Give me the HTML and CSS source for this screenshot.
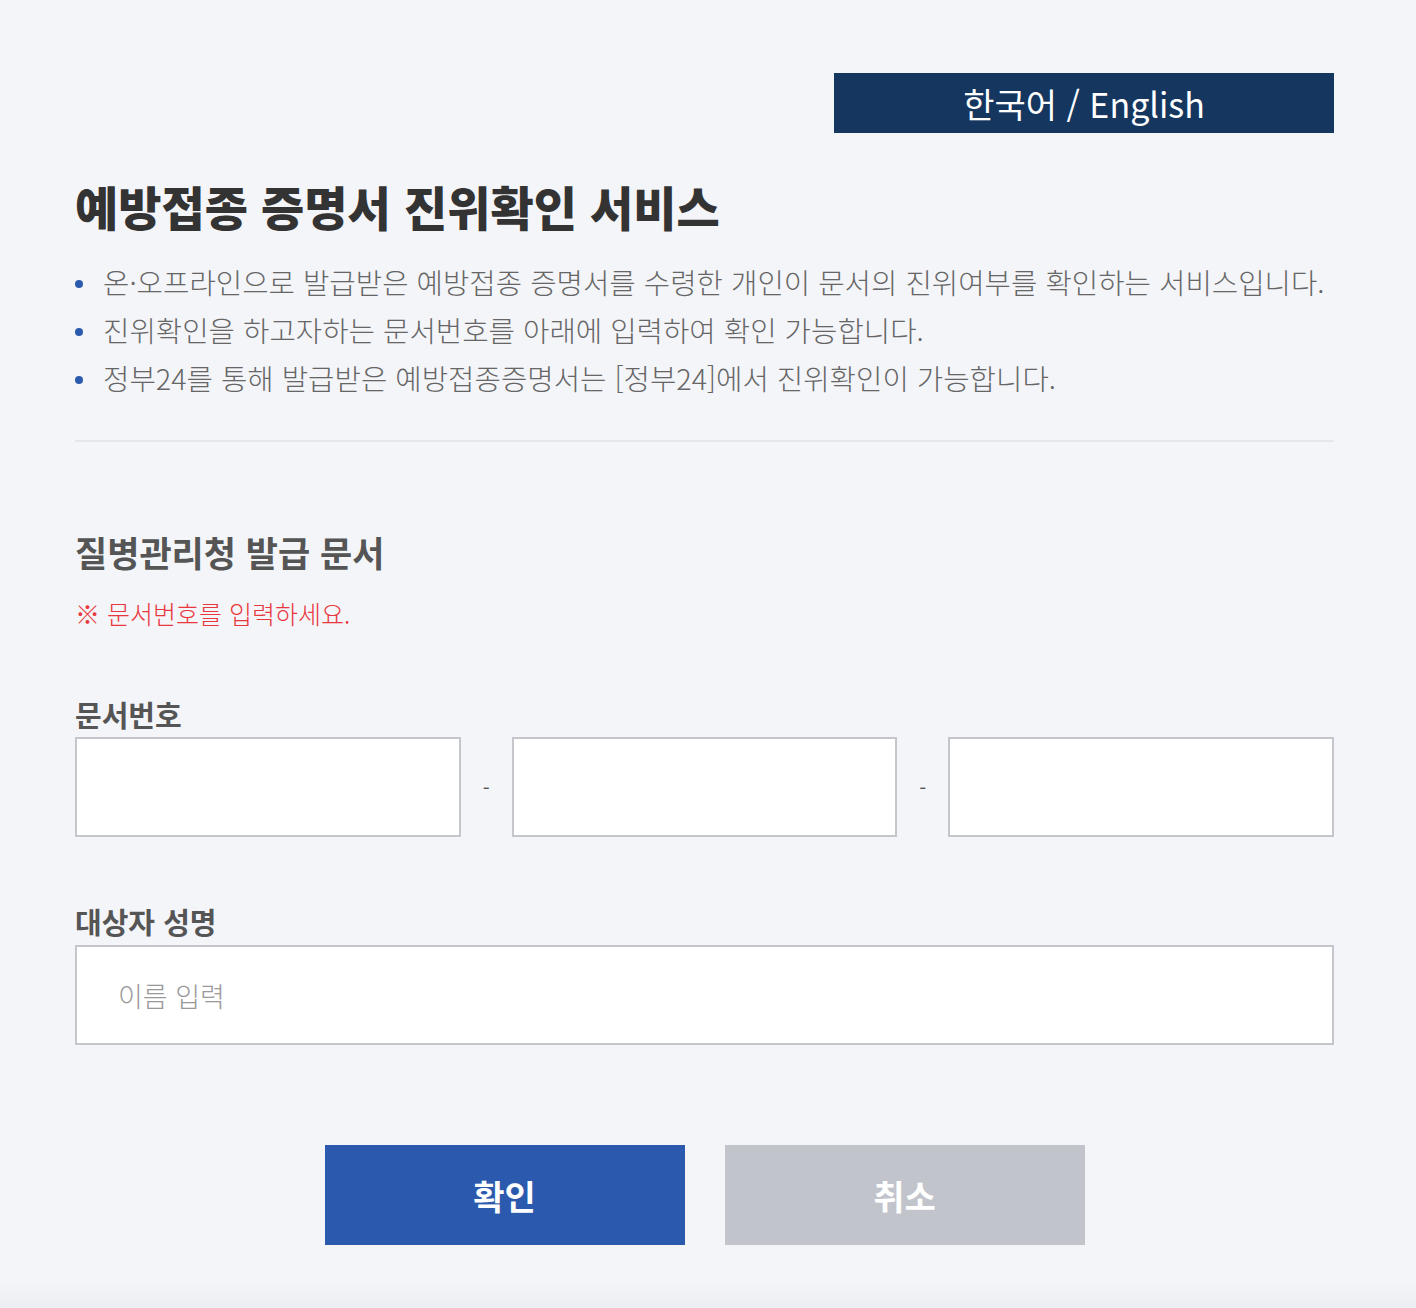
FILE: index.html
```html
<!DOCTYPE html>
<html lang="ko">
<head>
    <meta charset="UTF-8">
    <meta name="viewport" content="width=device-width, initial-scale=1.0">
    <title>예방접종 증명서 진위확인 서비스</title>
    <link rel="stylesheet" href="styles.css">
</head>
<body>
    <div class="wrap">
        <div class="lang-bar">
            <button class="lang-btn" type="button">한국어 / English</button>
        </div>

        <h1 class="title">예방접종 증명서 진위확인 서비스</h1>
        <ul class="info-list">
            <li>온·오프라인으로 발급받은 예방접종 증명서를 수령한 개인이 문서의 진위여부를 확인하는 서비스입니다.</li>
            <li>진위확인을 하고자하는 문서번호를 아래에 입력하여 확인 가능합니다.</li>
            <li>정부24를 통해 발급받은 예방접종증명서는 [정부24]에서 진위확인이 가능합니다.</li>
        </ul>

        <hr class="divider">

        <h2 class="sub-title">질병관리청 발급 문서</h2>
        <p class="notice">※ 문서번호를 입력하세요.</p>

        <form class="check-form">
            <label class="field-label" for="docNo1">문서번호</label>
            <div class="doc-row">
                <input type="text" id="docNo1" class="text-input">
                <span class="dash">-</span>
                <input type="text" id="docNo2" class="text-input">
                <span class="dash">-</span>
                <input type="text" id="docNo3" class="text-input">
            </div>

            <label class="field-label name-label" for="userName">대상자 성명</label>
            <input type="text" id="userName" class="text-input name-input" placeholder="이름 입력">

            <div class="btn-row">
                <button type="submit" class="btn btn-ok">확인</button>
                <button type="button" class="btn btn-cancel">취소</button>
            </div>
        </form>
    </div>
</body>
</html>
```

FILE: styles.css
```css
html, body {
    height: 100%;
}

body {
    font-family: "Noto Sans CJK KR", "Noto Sans", sans-serif;
    background: linear-gradient(to bottom, #f4f5f9 0, #f4f5f9 1280px, #eceef2 1308px);
    color: #333;
    margin: 0;
}

.wrap {
    width: 1259px;
    margin: 0 0 0 75px;
    padding-top: 73px;
}

.lang-bar {
    display: flex;
    justify-content: flex-end;
}

.lang-btn {
    width: 500px;
    height: 60px;
    background-color: #15365f;
    color: #fff;
    border: none;
    font-family: inherit;
    font-size: 34px;
    padding: 0;
    cursor: pointer;
}

.title {
    font-size: 47px;
    font-weight: 900;
    color: #333;
    margin: 41px 0 20px;
    line-height: 64px;
}

.info-list {
    list-style: none;
    margin: 0;
    padding: 0;
}

.info-list li {
    position: relative;
    padding-left: 28px;
    font-size: 28.7px;
    font-weight: 300;
    line-height: 48px;
    color: #666;
    white-space: nowrap;
}

.info-list li::before {
    content: "";
    position: absolute;
    left: 0;
    top: 22px;
    width: 8px;
    height: 8px;
    border-radius: 50%;
    background-color: #2b5aad;
}

.divider {
    border: none;
    border-top: 2px solid #e6e7eb;
    margin: 38px 0 0;
}

.sub-title {
    font-size: 35px;
    font-weight: 700;
    color: #555;
    margin: 84px 0 0;
    line-height: 52px;
}

.notice {
    font-size: 25px;
    font-weight: 300;
    color: #e8383d;
    margin: 17px 0 0;
    line-height: 36px;
}

.check-form {
    margin-top: 63px;
}

.field-label {
    display: block;
    font-size: 29px;
    font-weight: 700;
    color: #555;
    line-height: 40px;
    margin-bottom: 3px;
}

.doc-row {
    display: flex;
    align-items: center;
}

.text-input {
    box-sizing: border-box;
    height: 100px;
    border: 2px solid #c4c6cc;
    background: #fff;
    font-family: inherit;
    font-size: 27px;
    font-weight: 300;
    padding: 0 41px;
    outline: none;
}

.doc-row .text-input {
    width: 386px;
}

.dash {
    width: 51px;
    text-align: center;
    font-size: 20px;
    color: #555;
}

.name-label {
    margin-top: 64px;
    margin-bottom: 4px;
}

.name-input {
    width: 100%;
    color: #333;
}

.name-input::placeholder {
    color: #999;
}

.btn-row {
    display: flex;
    justify-content: center;
    gap: 40px;
    margin-top: 100px;
}

.btn {
    width: 360px;
    height: 100px;
    border: none;
    color: #fff;
    font-family: inherit;
    font-size: 34px;
    font-weight: 700;
    cursor: pointer;
}

.btn-ok {
    background-color: #2a59ad;
}

.btn-cancel {
    background-color: #c1c4cb;
}
```
